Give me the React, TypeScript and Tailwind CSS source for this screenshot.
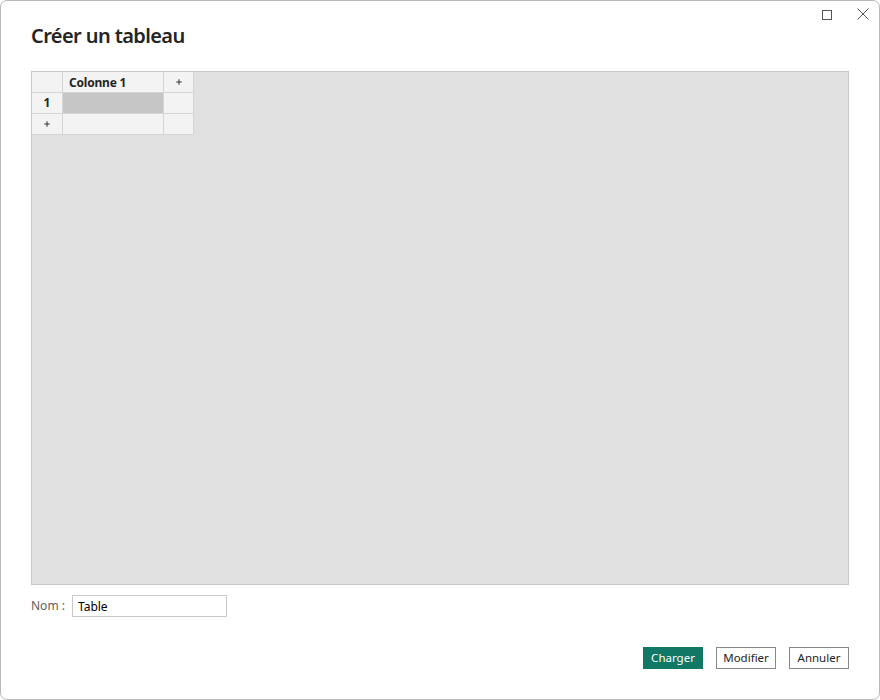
import { Plus } from 'lucide-react';

const font = { fontFamily: '"Noto Sans", "Open Sans", sans-serif' };

export default function App() {
  return (
    <div className="w-[880px] h-[700px] bg-white" style={font}>
      <div className="relative w-[880px] h-[700px] border border-[#b9b9b9] rounded-[7px] bg-white flex flex-col">
        {/* Window controls */}
        <div className="absolute top-[7px] right-[10px] flex items-center gap-[25px] text-[#555]">
          <svg width="10" height="10" viewBox="0 0 10 10" className="mt-[1px]">
            <rect x="0.5" y="0.5" width="9" height="9" fill="none" stroke="#555" strokeWidth="1" />
          </svg>
          <svg width="12" height="12" viewBox="0 0 12 12">
            <path d="M0.5 0.5 L11.5 11.5 M11.5 0.5 L0.5 11.5" stroke="#555" strokeWidth="1" />
          </svg>
        </div>

        {/* Title */}
        <h1 className="pl-[30px] pt-[21px] text-[20px] leading-[28px] font-semibold text-[#252423] tracking-[-0.6px]">
          Créer un tableau
        </h1>

        {/* Grid area */}
        <div className="ml-[30px] mt-[21px] w-[818px] h-[514px] bg-[#e1e1e1] border border-[#c8c8c8]">
          <div className="grid grid-cols-[31px_101px_30px] w-[162px] text-[12px] text-[#252423]">
            <div className="h-[21px] bg-[#f3f3f3] border-r border-b border-[#d5d5d5]" />
            <div className="h-[21px] bg-[#f3f3f3] border-r border-b border-[#d5d5d5] font-bold pl-[6px] leading-[21px] tracking-[-0.2px]">
              Colonne 1
            </div>
            <div className="h-[21px] bg-[#f3f3f3] border-r border-b border-[#d5d5d5] flex items-center justify-center">
              <Plus size={8} strokeWidth={3} className="text-[#333]" />
            </div>

            <div className="h-[21px] bg-[#f3f3f3] border-r border-b border-[#d5d5d5] font-bold flex items-center justify-center text-[12px]">
              1
            </div>
            <div className="h-[21px] bg-[#c6c6c6] border-r border-b border-[#d5d5d5]" />
            <div className="h-[21px] bg-[#f3f3f3] border-r border-b border-[#d5d5d5]" />

            <div className="h-[21px] bg-[#f3f3f3] border-r border-b border-[#d5d5d5] flex items-center justify-center">
              <Plus size={8} strokeWidth={3} className="text-[#333]" />
            </div>
            <div className="h-[21px] bg-[#f3f3f3] border-r border-b border-[#d5d5d5]" />
            <div className="h-[21px] bg-[#f3f3f3] border-r border-b border-[#d5d5d5]" />
          </div>
        </div>

        {/* Name */}
        <div className="ml-[30px] mt-[10px] flex items-center gap-[7px]">
          <span className="text-[12px] text-[#605e5c]">Nom :</span>
          <input
            defaultValue="Table"
            className="w-[155px] h-[22px] border border-[#c8c8c8] px-[5px] text-[12px] text-black outline-none"
            style={font}
          />
        </div>

        {/* Buttons */}
        <div className="mt-[30px] mr-[30px] flex justify-end gap-[13px] text-[11.5px]">
          <button className="w-[60px] h-[22px] bg-[#117865] text-white">Charger</button>
          <button className="w-[60px] h-[22px] border border-[#8a8886] text-[#252423] bg-white">Modifier</button>
          <button className="w-[60px] h-[22px] border border-[#8a8886] text-[#252423] bg-white">Annuler</button>
        </div>
      </div>
    </div>
  );
}
